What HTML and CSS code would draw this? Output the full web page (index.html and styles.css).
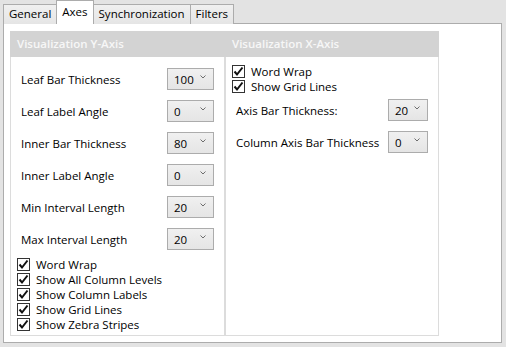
FILE: index.html
```html
<!DOCTYPE html>
<html lang="en">
<head>
    <meta charset="UTF-8">
    <meta name="viewport" content="width=device-width, initial-scale=1.0">
    <title>Axes</title>
    <link rel="stylesheet" href="styles.css">
</head>
<body>
<div class="window">
    <div class="tabs">
        <div class="tab">General</div>
        <div class="tab active">Axes</div>
        <div class="tab">Synchronization</div>
        <div class="tab">Filters</div>
    </div>

    <div class="panel">
        <!-- Y axis -->
        <div class="group group-left">
            <div class="group-header">Visualization Y-Axis</div>
            <div class="group-body body-left">
                <div class="field"><span>Leaf Bar Thickness</span><div class="combo combo-wide"><span>100</span><svg class="arrow" width="6" height="4" viewBox="0 0 6 4"><polyline points="0.5,0.5 3,3 5.5,0.5" /></svg></div></div>
                <div class="field"><span>Leaf Label Angle</span><div class="combo combo-wide"><span>0</span><svg class="arrow" width="6" height="4" viewBox="0 0 6 4"><polyline points="0.5,0.5 3,3 5.5,0.5" /></svg></div></div>
                <div class="field"><span>Inner Bar Thickness</span><div class="combo combo-wide"><span>80</span><svg class="arrow" width="6" height="4" viewBox="0 0 6 4"><polyline points="0.5,0.5 3,3 5.5,0.5" /></svg></div></div>
                <div class="field"><span>Inner Label Angle</span><div class="combo combo-wide"><span>0</span><svg class="arrow" width="6" height="4" viewBox="0 0 6 4"><polyline points="0.5,0.5 3,3 5.5,0.5" /></svg></div></div>
                <div class="field"><span>Min Interval Length</span><div class="combo combo-wide"><span>20</span><svg class="arrow" width="6" height="4" viewBox="0 0 6 4"><polyline points="0.5,0.5 3,3 5.5,0.5" /></svg></div></div>
                <div class="field"><span>Max Interval Length</span><div class="combo combo-wide"><span>20</span><svg class="arrow" width="6" height="4" viewBox="0 0 6 4"><polyline points="0.5,0.5 3,3 5.5,0.5" /></svg></div></div>

                <div class="checks">
                    <label class="check"><span class="box"><svg width="11" height="11" viewBox="0 0 11 11"><polyline points="1.5,5.5 4,8.5 9.5,1.5" /></svg></span>Word Wrap</label>
                    <label class="check"><span class="box"><svg width="11" height="11" viewBox="0 0 11 11"><polyline points="1.5,5.5 4,8.5 9.5,1.5" /></svg></span>Show All Column Levels</label>
                    <label class="check"><span class="box"><svg width="11" height="11" viewBox="0 0 11 11"><polyline points="1.5,5.5 4,8.5 9.5,1.5" /></svg></span>Show Column Labels</label>
                    <label class="check"><span class="box"><svg width="11" height="11" viewBox="0 0 11 11"><polyline points="1.5,5.5 4,8.5 9.5,1.5" /></svg></span>Show Grid Lines</label>
                    <label class="check"><span class="box"><svg width="11" height="11" viewBox="0 0 11 11"><polyline points="1.5,5.5 4,8.5 9.5,1.5" /></svg></span>Show Zebra Stripes</label>
                </div>
            </div>
        </div>

        <!-- X axis -->
        <div class="group group-right">
            <div class="group-header">Visualization X-Axis</div>
            <div class="group-body body-right">
                <div class="checks">
                    <label class="check"><span class="box"><svg width="11" height="11" viewBox="0 0 11 11"><polyline points="1.5,5.5 4,8.5 9.5,1.5" /></svg></span>Word Wrap</label>
                    <label class="check"><span class="box"><svg width="11" height="11" viewBox="0 0 11 11"><polyline points="1.5,5.5 4,8.5 9.5,1.5" /></svg></span>Show Grid Lines</label>
                </div>
                <div class="field"><span>Axis Bar Thickness:</span><div class="combo combo-narrow"><span>20</span><svg class="arrow" width="6" height="4" viewBox="0 0 6 4"><polyline points="0.5,0.5 3,3 5.5,0.5" /></svg></div></div>
                <div class="field"><span>Column Axis Bar Thickness</span><div class="combo combo-narrow"><span>0</span><svg class="arrow" width="6" height="4" viewBox="0 0 6 4"><polyline points="0.5,0.5 3,3 5.5,0.5" /></svg></div></div>
            </div>
        </div>
    </div>
</div>
</body>
</html>
```

FILE: styles.css
```css
body {
  margin: 0;
  background-color: #e3e3e3;
  font-family: "Open Sans", "Noto Sans", sans-serif;
  font-size: 11.5px;
  color: #000;
}

.window {
  padding: 1px 4px 4px 3px;
}

/* Tab strip */
.tabs {
  display: flex;
  align-items: flex-end;
  height: 23px;
}

.tab {
  height: 19px;
  line-height: 17px;
  padding: 0 5px;
  margin-right: -1px;
  border: 1px solid #acacac;
  border-bottom: none;
  background: linear-gradient(#f0f0f0, #e5e5e5);
}

.tab.active {
  position: relative;
  z-index: 1;
  height: 23px;
  line-height: 21px;
  background: #fff;
}

/* Page */
.panel {
  display: flex;
  box-sizing: border-box;
  height: 320px;
  margin-top: -1px;
  padding: 7px 0 6px 6px;
  border: 1px solid #acacac;
  background-color: #fff;
}

.group {
  display: flex;
  flex-direction: column;
  box-sizing: border-box;
  border: 1px solid #dcdcdc;
}

.group-left {
  width: 215px;
}

.group-right {
  width: 214px;
}

.group-header {
  height: 26px;
  line-height: 26px;
  margin: -1px -1px 0;
  padding-left: 7px;
  background-color: #d3d3d3;
  color: #f7f7f7;
  font-weight: 600;
}

.group-body {
  padding: 0 10px 0 0;
}

.body-left {
  padding-top: 6px;
}

.body-right {
  padding-top: 7px;
}

/* Label + combo rows */
.field {
  display: flex;
  align-items: center;
  justify-content: space-between;
  height: 32px;
  padding-left: 10px;
}

.combo {
  display: flex;
  align-items: center;
  justify-content: space-between;
  box-sizing: border-box;
  height: 22px;
  padding: 0 6px;
  border: 1px solid #acacac;
  background: linear-gradient(#f0f0f0, #e5e5e5);
}

.combo-wide {
  width: 47px;
}

.combo-narrow {
  width: 40px;
}

.arrow {
  margin-bottom: 5px;
  margin-right: 1px;
}

.arrow polyline {
  fill: none;
  stroke: #6d6d6d;
  stroke-width: 1;
}

/* Check boxes */
.body-left .checks {
  margin-top: 2px;
}

.check {
  display: flex;
  align-items: center;
  height: 15px;
  padding-left: 6px;
}

.box {
  display: flex;
  align-items: center;
  justify-content: center;
  width: 11px;
  height: 11px;
  margin-right: 6px;
  border: 1px solid #333;
  background-color: #fff;
}

.box polyline {
  fill: none;
  stroke: #111;
  stroke-width: 2;
}
```
